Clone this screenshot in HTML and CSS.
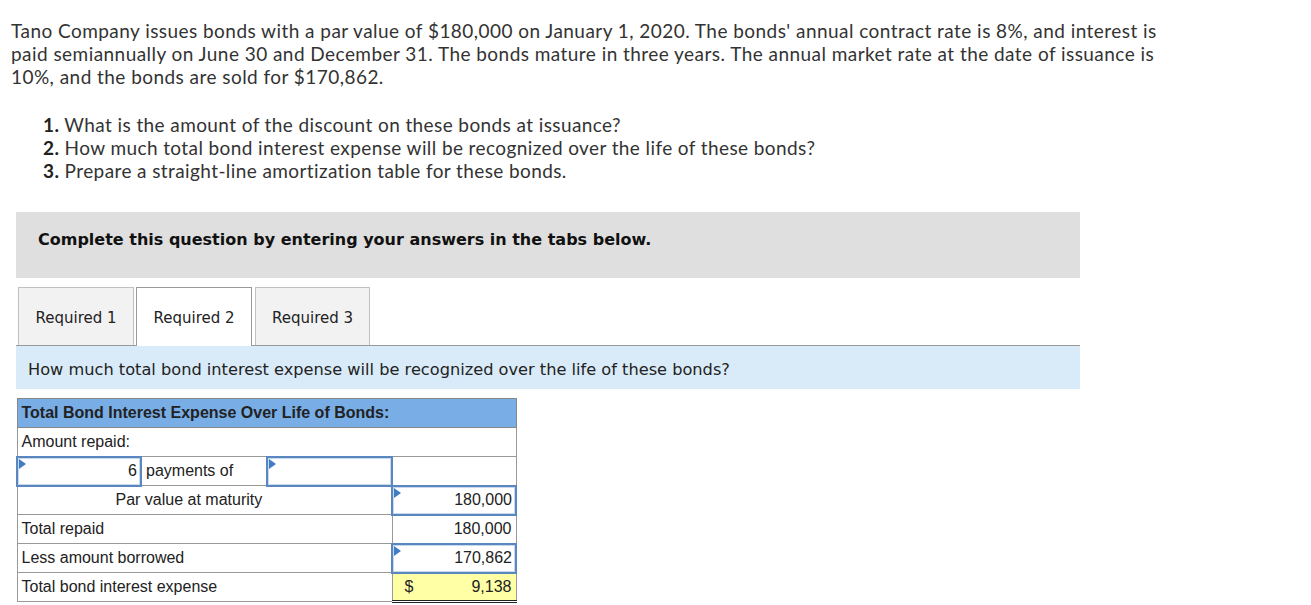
FILE: index.html
```html
<!DOCTYPE html>
<html>
<head>
<meta charset="utf-8">
<link rel="stylesheet" href="styles.css">
</head>
<body>
<div class="page">
  <p class="intro">Tano Company issues bonds with a par value of $180,000 on January 1, 2020. The bonds' annual contract rate is 8%, and interest is paid semiannually on June 30 and December 31. The bonds mature in three years. The annual market rate at the date of issuance is 10%, and the bonds are sold for $170,862.</p>
  <ol class="reqs">
    <li><b>1.</b> What is the amount of the discount on these bonds at issuance?</li>
    <li><b>2.</b> How much total bond interest expense will be recognized over the life of these bonds?</li>
    <li><b>3.</b> Prepare a straight-line amortization table for these bonds.</li>
  </ol>
  <div class="banner">Complete this question by entering your answers in the tabs below.</div>
  <div class="tabs">
    <div class="tab">Required 1</div>
    <div class="tab active">Required 2</div>
    <div class="tab">Required 3</div>
  </div>
  <div class="question">How much total bond interest expense will be recognized over the life of these bonds?</div>
  <table class="sheet">
    <colgroup>
      <col class="c1"><col class="c2"><col class="c3"><col class="c4">
    </colgroup>
    <tr class="head"><td colspan="4">Total Bond Interest Expense Over Life of Bonds:</td></tr>
    <tr><td colspan="4">Amount repaid:</td></tr>
    <tr>
      <td class="inp num"><span class="flag"></span>6</td>
      <td class="plain">payments of</td>
      <td class="inp"><span class="flag"></span></td>
      <td class="blank"></td>
    </tr>
    <tr>
      <td colspan="3" class="par">Par value at maturity</td>
      <td class="inp num"><span class="flag"></span>180,000</td>
    </tr>
    <tr>
      <td colspan="3">Total repaid</td>
      <td class="num calc">180,000</td>
    </tr>
    <tr>
      <td colspan="3">Less amount borrowed</td>
      <td class="inp num"><span class="flag"></span>170,862</td>
    </tr>
    <tr>
      <td colspan="3">Total bond interest expense</td>
      <td class="num total"><span class="cur">$</span>9,138</td>
    </tr>
  </table>
</div>
</body>
</html>
```
FILE: styles.css
```css
html, body { margin: 0; padding: 0; background: #fff; }
.page { color: #2d2d2d; }
.intro {
  font-family: "Lato", "Liberation Sans", sans-serif;
  font-size: 19px;
  letter-spacing: 0.45px;
  line-height: 23px;
  margin: 0;
  padding: 19px 130px 0 11px;
  color: #333;
}
.reqs {
  list-style: none;
  margin: 0;
  padding: 25px 0 0 43px;
  font-family: "Lato", "Liberation Sans", sans-serif;
  font-size: 19px;
  letter-spacing: 0.4px;
  line-height: 23px;
  color: #333;
}
.reqs b { font-weight: 700; color: #222; }
.banner {
  margin: 30px 0 0 16px;
  width: 1064px;
  height: 66px;
  box-sizing: border-box;
  background: #dfdfdf;
  font-family: "DejaVu Sans", Verdana, sans-serif;
  font-weight: bold;
  font-size: 16px;
  padding: 18px 0 0 22px;
  color: #111;
}
.tabs {
  display: flex;
  margin: 9px 0 0 18px;
  gap: 2px;
  height: 58px;
  align-items: flex-end;
}
.tab {
  box-sizing: border-box;
  height: 58px;
  width: 116px;
  background: #f2f2f2;
  border: 1px solid #c0c0c0;
  border-bottom: none;
  font-family: "DejaVu Sans", Verdana, sans-serif;
  font-size: 15px;
  color: #222;
  display: flex;
  align-items: center;
  justify-content: center;
  padding-top: 3px;
}
.tab.active {
  background: #fff;
  border-color: #999;
  height: 59px;
  margin-bottom: -1px;
  position: relative;
  padding-bottom: 1px;
}
.tab:nth-child(3) { margin-left: 1px; width: 115px; }
.question {
  margin-left: 16px;
  width: 1064px;
  box-sizing: border-box;
  height: 44px;
  border-top: 1px solid #999;
  background: #d9ebf9;
  font-family: "DejaVu Sans", Verdana, sans-serif;
  font-size: 16.2px;
  color: #222;
  padding: 14px 0 0 12px;
}
.sheet {
  margin: 9px 0 0 16px;
  border-collapse: collapse;
  table-layout: fixed;
  width: 499px;
  font-family: "Liberation Sans", Arial, sans-serif;
  font-size: 16px;
  color: #222;
}
.c1 { width: 124px; }
.c2 { width: 126px; }
.c3 { width: 125px; }
.c4 { width: 124px; }
.sheet td {
  border: 1px solid #999;
  height: 29px;
  padding: 0 4px;
  box-sizing: border-box;
  position: relative;
  white-space: nowrap;
}
.sheet tr.head td {
  background: #78ade6;
  font-weight: bold;
  border-color: #888;
}
.sheet td.par { padding-left: 98px; }
.sheet td.num { text-align: right; }
.sheet td.inp {
  border: 2px solid #5b87c0;
  box-shadow: inset 0 0 0 1px #c8d9ee;
  padding-right: 3px;
}
.sheet td.plain { padding-left: 4px; }
.flag {
  position: absolute;
  left: 1px;
  top: 1px;
  width: 0;
  height: 0;
  border-top: 5px solid transparent;
  border-bottom: 5px solid transparent;
  border-left: 7px solid #3f7dc5;
}
.sheet td.calc { border-top: 2px solid #333; }
.sheet td.total {
  background: #ffffa6;
  border-top: 2px solid #333;
  border-bottom: 3px double #222;
}
.cur { float: left; padding-left: 8px; }
```
